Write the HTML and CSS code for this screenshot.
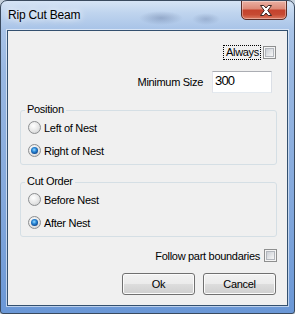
FILE: index.html
```html
<!DOCTYPE html>
<html>
<head>
<meta charset="utf-8">
<link rel="stylesheet" href="styles.css">
</head>
<body>
<div class="window">
  <div class="titlebar">
    <span class="title">Rip Cut Beam</span>
    <div class="close">
      <svg width="14" height="11" viewBox="0 0 14 11"><path d="M1.5 0.5 H4.8 L7 3 L9.2 0.5 H12.5 L8.8 5.5 L12.5 10.5 H9.2 L7 8 L4.8 10.5 H1.5 L5.2 5.5 Z" fill="#fff" stroke="#3b2420" stroke-width="1" stroke-linejoin="round"/></svg>
    </div>
  </div>
  <div class="client">
    <div class="row row-always">
      <span class="focus-label">Always</span>
      <span class="checkbox"></span>
    </div>
    <div class="row row-size">
      <span class="label">Minimum Size</span>
      <div class="textbox">300</div>
    </div>
    <div class="group">
      <span class="group-title">Position</span>
      <div class="radio-row"><span class="radio"></span><span>Left of Nest</span></div>
      <div class="radio-row"><span class="radio checked"></span><span>Right of Nest</span></div>
    </div>
    <div class="group">
      <span class="group-title">Cut Order</span>
      <div class="radio-row"><span class="radio"></span><span>Before Nest</span></div>
      <div class="radio-row"><span class="radio checked"></span><span>After Nest</span></div>
    </div>
    <div class="row row-follow">
      <span>Follow part boundaries</span>
      <span class="checkbox"></span>
    </div>
    <div class="row row-buttons">
      <div class="button">Ok</div>
      <div class="button">Cancel</div>
    </div>
  </div>
</div>
</body>
</html>
```

FILE: styles.css
```css
* { box-sizing: border-box; }
html, body { margin: 0; padding: 0; }
body {
  background: #c4d0dc;
  font-family: "Liberation Sans", Arial, sans-serif;
  font-size: 11px;
  letter-spacing: -0.3px;
  color: #000;
}
.window {
  width: 295px;
  height: 314px;
  border: 1px solid #3a4a5e;
  border-radius: 7px 7px 3px 3px;
  background:
    radial-gradient(ellipse 22px 7px at 160px 17px, rgba(80,100,140,0.35), rgba(80,100,140,0)),
    radial-gradient(ellipse 14px 6px at 205px 18px, rgba(80,100,140,0.28), rgba(80,100,140,0)),
    linear-gradient(180deg, #d6e4f5 0px, #bfd4ee 12px, #a9c4e8 28px, #99b8e2 70px, #83a8dc 200px, #6a97d6 313px);
  display: flex;
  flex-direction: column;
  overflow: hidden;
}
.titlebar {
  height: 29px;
  flex: none;
  display: flex;
  align-items: flex-start;
}
.title {
  margin: 7px 0 0 7px;
  font-size: 12px;
  line-height: 14px;
  letter-spacing: -0.2px;
  color: #000;
  text-shadow: 0 0 6px #fff, 0 0 10px rgba(255,255,255,0.9);
}
.close {
  margin: -1px 7px 0 auto;
  width: 46px;
  height: 20px;
  border: 1px solid #5a2d26;
  border-radius: 0 0 5px 5px;
  background: linear-gradient(180deg, #eab0a3 0%, #dd8b79 42%, #c5432d 52%, #c64a33 75%, #dc7a61 100%);
  box-shadow: inset 0 0 0 1px rgba(255,255,255,0.35);
  display: flex;
  align-items: center;
  justify-content: center;
}
.close svg { display: block; margin-left: 3px; }
.client {
  flex: 1;
  margin: 0 6px 7px 6px;
  background: #f0f0f0;
  border: 1px solid #33506f;
  box-shadow: 0 0 0 1px rgba(255,255,255,0.55);
  display: flex;
  flex-direction: column;
}
.row {
  display: flex;
  align-items: center;
  justify-content: flex-end;
}
.row-always {
  margin-top: 14px;
  height: 15px;
  padding-right: 11px;
  gap: 2px;
}
.focus-label {
  border: 1px dotted #000;
  height: 15px;
  line-height: 13px;
  padding: 0 1px 0 2px;
}
.checkbox {
  width: 13px;
  height: 13px;
  border: 1px solid #8e8f8f;
  background: #f4f4f4;
  position: relative;
}
.checkbox::after {
  content: "";
  position: absolute;
  inset: 1px;
  border: 1px solid #b2b6bc;
  background: linear-gradient(135deg, #cbcfd5, #f7f7f7);
}
.row-size {
  margin-top: 11px;
  height: 22px;
  padding-right: 15px;
  gap: 9px;
}
.textbox {
  width: 60px;
  height: 22px;
  background: #fff;
  border: 1px solid;
  border-color: #abadb3 #dbdfe6 #e3e9ef #e2e3ea;
  font-size: 13px;
  letter-spacing: -0.8px;
  line-height: 18px;
  padding: 0 2px;
}
.group {
  margin: 17px 10px 0 12px;
  height: 55px;
  border: 1px solid #d5dfe5;
  border-radius: 3px;
  position: relative;
  padding: 10px 0 0 7px;
  display: flex;
  flex-direction: column;
  gap: 10px;
}
.group-title {
  position: absolute;
  top: -8px;
  left: 4px;
  padding: 0 2px;
  background: #f0f0f0;
  line-height: 13px;
}
.radio-row {
  display: flex;
  align-items: center;
  gap: 3px;
  height: 13px;
}
.radio {
  width: 13px;
  height: 13px;
  border-radius: 50%;
  border: 1px solid #8c8e90;
  background: radial-gradient(circle at 40% 35%, #ffffff 0%, #e6e6e6 55%, #c9cbcd 100%);
  position: relative;
  flex: none;
}
.radio.checked::after {
  content: "";
  position: absolute;
  inset: 2px;
  border-radius: 50%;
  background: radial-gradient(circle at 45% 40%, #9adcff 0%, #2c8ad8 35%, #0e4c96 70%, #0a2f60 100%);
}
.row-follow {
  margin-top: 12px;
  height: 13px;
  padding-right: 10px;
  gap: 4px;
}
.row-buttons {
  margin-top: 11px;
  padding-right: 11px;
  gap: 8px;
}
.button {
  width: 73px;
  height: 22px;
  border: 1px solid #707070;
  border-radius: 3px;
  background: linear-gradient(180deg, #f2f2f2 0%, #ebebeb 50%, #dddddd 51%, #cfcfcf 100%);
  box-shadow: inset 0 0 0 1px #fbfbfb;
  display: flex;
  align-items: center;
  justify-content: center;
}
```
